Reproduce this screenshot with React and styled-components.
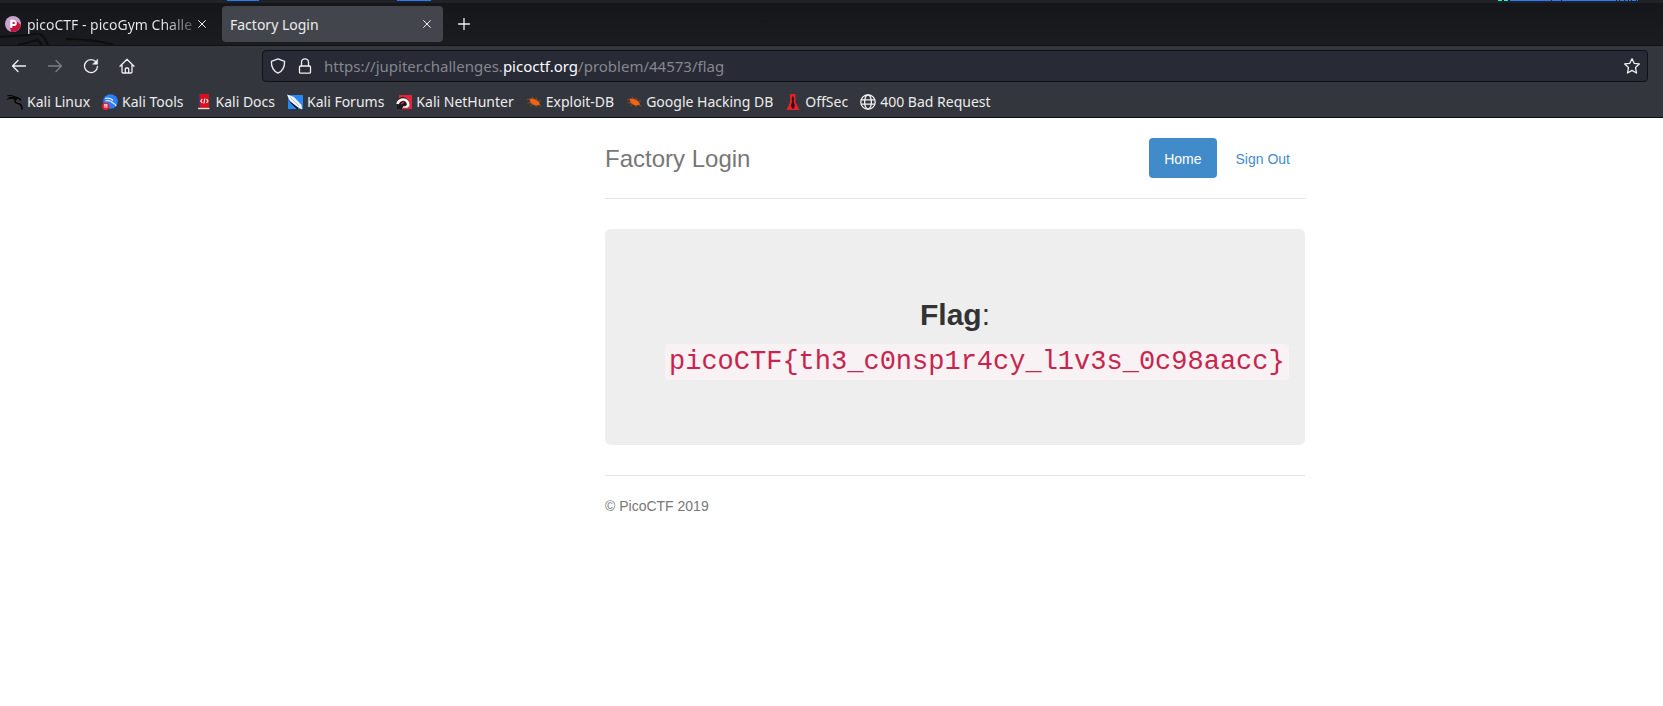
import React from "react";
import styled, { createGlobalStyle } from "styled-components";

const uiFont = `"Noto Sans", "Open Sans", sans-serif`;
const pageFont = `"Liberation Sans", Arial, sans-serif`;

const GlobalStyle = createGlobalStyle`
  *, *::before, *::after { box-sizing: border-box; }
  body { margin: 0; background: #fff; }
  button, input { font: inherit; color: inherit; }
`;

const Browser = styled.div`
  font: 14px/20px ${uiFont};
  color: #ececec;
`;

const PanelEdge = styled.div`
  display: flex;
  justify-content: space-between;
  height: 3px;
  background: #202228;
`;

const EdgeGroup = styled.div`
  display: flex;
  gap: ${(p) => p.$gap}px;
  padding: 0 ${(p) => p.$right || 0}px 0 ${(p) => p.$left || 0}px;
`;

const EdgeMark = styled.span`
  width: ${(p) => p.$size}px;
  height: 1px;
  margin-right: ${(p) => (p.$cyan ? 1 : 0)}px;
  background: ${(p) => (p.$cyan ? "#1ef5c8" : "#2a7bff")};
`;

const TabStrip = styled.div`
  position: relative;
  display: flex;
  align-items: center;
  height: 43px;
  background: linear-gradient(#15161a, #1b1c20);
  border-bottom: 1px solid #101114;
`;

const StripArt = styled.svg`
  position: absolute;
  left: 0;
  bottom: 0;
`;

const Tab = styled.div`
  position: relative;
  display: flex;
  align-items: center;
  gap: 6px;
  flex: 0 1 ${(p) => (p.$active ? 221 : 222)}px;
  min-width: 0;
  height: 36px;
  padding: 0 ${(p) => (p.$active ? "10px 0 8px" : "14px 0 5px")};
  border-radius: 4px;
  background: ${(p) => (p.$active ? "#42454b" : "transparent")};
`;

const TabTitle = styled.span`
  flex: 1;
  min-width: 0;
  padding-top: 2px;
  white-space: nowrap;
  ${(p) =>
    p.$fade &&
    `
    margin-right: -6px;
    background: linear-gradient(to right, #ececec 80%, #4a4b50);
    background-clip: text;
    color: transparent;
  `}
`;

const IconButton = styled.button`
  display: grid;
  place-items: center;
  flex: none;
  width: ${(p) => p.$size}px;
  height: ${(p) => p.$size}px;
  padding: 0;
  border: 0;
  background: none;
  color: ${(p) => (p.$dim ? "#7c7e84" : "#f0f0f2")};
`;

const NavBar = styled.div`
  display: flex;
  align-items: center;
  height: 40px;
  padding: 0 15px 0 1px;
  background: #33363d;
`;

const NavButtons = styled.div`
  display: flex;
  flex: 0 0 261px;
`;

const UrlBar = styled.div`
  display: flex;
  align-items: center;
  gap: 2px;
  flex: 1;
  min-width: 0;
  height: 32px;
  padding: 0 4px;
  border: 1px solid #0f1115;
  border-radius: 4px;
  background: #282a36;
`;

const UrlField = styled.label`
  position: relative;
  flex: 1;
  min-width: 0;
  margin-left: 3px;
  overflow: hidden;
  white-space: nowrap;
  color: #85878e;
  font-size: 15px;
`;

const UrlHost = styled.span`
  color: #fbfbfe;
`;

const UrlInput = styled.input`
  position: absolute;
  inset: 0;
  width: 100%;
  padding: 0;
  border: 0;
  outline: 0;
  background: none;
  color: transparent;
  caret-color: #fff;
`;

const Bookmarks = styled.nav`
  display: flex;
  align-items: center;
  gap: 12px;
  height: 32px;
  padding: 1px 7px 0;
  background: #33363d;
  border-bottom: 1px solid #0c0c0d;
`;

const Bookmark = styled.a`
  display: flex;
  align-items: center;
  gap: 4px;
  color: inherit;
  text-decoration: none;
  white-space: nowrap;
`;

const Page = styled.div`
  display: grid;
  grid-template-columns: minmax(0, 605fr) minmax(0, 700px) minmax(0, 358fr);
  padding-top: 20px;
  font: 14px/20px ${pageFont};
  color: #333;
`;

const Container = styled.div`
  grid-column: 2;
`;

const Header = styled.header`
  display: flex;
  justify-content: space-between;
  align-items: center;
  padding-bottom: 20px;
  border-bottom: 1px solid #e5e5e5;
`;

const SiteTitle = styled.h3`
  margin: 0;
  padding-top: 2px;
  font-size: 24px;
  line-height: 38px;
  font-weight: 400;
  color: #777;
`;

const Pills = styled.nav`
  display: flex;
  gap: 4px;
`;

const Pill = styled.a`
  padding: 11px 15px 9px;
  border-radius: 4px;
  text-decoration: none;
  background: ${(p) => (p.$active ? "#428bca" : "transparent")};
  color: ${(p) => (p.$active ? "#fff" : "#428bca")};
`;

const Jumbotron = styled.section`
  margin: 30px 0;
  padding: 64px 60px 61px;
  border-radius: 6px;
  background: #eee;
  text-align: center;
  font-size: 30px;
  line-height: 44px;
`;

const FlagText = styled.p`
  margin: 0;
`;

const FlagCode = styled.code`
  padding: 3px 4px;
  border-radius: 4px;
  background: #f9f2f4;
  color: #c7254e;
  font-family: "Liberation Mono", "Courier New", monospace;
  font-size: 27px;
  white-space: nowrap;
`;

const Footer = styled.footer`
  padding-top: 20px;
  border-top: 1px solid #e5e5e5;
  color: #777;
`;

const Svg = ({ size = 16, children, ...rest }) => (
  <svg width={size} height={size} viewBox="0 0 16 16" fill="none" aria-hidden="true" {...rest}>
    {children}
  </svg>
);

const line = { stroke: "currentColor", strokeWidth: 1.3, strokeLinecap: "round", strokeLinejoin: "round" };

const PicoIcon = () => (
  <Svg>
    <circle cx="8" cy="8" r="8" fill="#c9a2cf" />
    <path d="M10 3.5 15.9 9A8 8 0 0 1 6 15.7L5 12Z" fill="#c8143c" />
    <path d="M6.3 12V4.8h2.4a2.1 2.1 0 0 1 0 4.3H6.5" stroke="#fff" strokeWidth="2" />
  </Svg>
);
const CloseIcon = () => (
  <Svg size={10} {...line}><path d="M2.500 2.500l11 11M13.500 2.500l-11 11" strokeWidth="1.600" /></Svg>
);
const PlusIcon = () => <Svg {...line}><path d="M8 2.5v11M2.5 8h11" /></Svg>;
const BackIcon = () => <Svg {...line}><path d="M14.5 8h-13M7 2.5 1.5 8 7 13.5" /></Svg>;
const ForwardIcon = () => <Svg {...line}><path d="M1.5 8h13M9 2.5 14.5 8 9 13.5" /></Svg>;
const ReloadIcon = () => (
  <Svg {...line}>
    <path d="M13.2 4.2A6.5 6.5 0 1 0 14.5 8.5" />
    <path d="M14.6 1.5v4.7H9.9Z" fill="currentColor" strokeWidth=".6" />
  </Svg>
);
const HomeIcon = () => (
  <Svg {...line}>
    <path d="M1 8.3 8 1.2l7 7.1M3 6.8V14q0 1 1 1h8q1 0 1-1V6.8M6.3 15v-4q0-1 1-1h1.4q1 0 1 1v4" />
  </Svg>
);
const ShieldIcon = () => (
  <Svg {...line}><path d="M8 .9 14.6 3.4C14.7 9 12.2 13.2 8 15.1 3.8 13.2 1.3 9 1.4 3.4Z" /></Svg>
);
const LockIcon = () => (
  <Svg {...line}>
    <rect x="2.5" y="8" width="11" height="7.2" rx="1" />
    <path d="M4.5 8V4.3a3.5 3.5 0 0 1 7 0V8" />
  </Svg>
);
const StarIcon = () => (
  <Svg {...line}>
    <path d="M8 .7l2.200 4.600 5.100.6-3.800 3.500 1 5.600L8 12.400 3.500 15l1-5.600L.7 5.900l5.100-.6Z" />
  </Svg>
);
const DragonIcon = () => (
  <Svg stroke="#050506" strokeLinecap="round">
    <path d="M.8 1.8c2.5-.6 5-.4 7.5 1.4M.5 5.2c2-1 4.500-1.300 7-.2M2 3.500c3-.4 6 .5 7.500 2" strokeWidth="1.100" />
    <path d="M8 3.200c2 .2 4 .3 5.500 2.600M9 5c-2 1.500-1 4.200 2 4.500 2.500.3 4 2 4 5.500" strokeWidth="1.600" />
  </Svg>
);
const ToolsIcon = () => (
  <Svg>
    <circle cx="8.500" cy="7.500" r="7.300" fill="#2a7fff" />
    <path d="M3 4.500c4-1 6-.4 8 2M3.500 7c3-.7 5-.2 6.500 1.200s3.500 1 4 4" stroke="#e8f2ff" strokeWidth="1.200" />
    <circle cx="3.800" cy="12.200" r="3.700" fill="#e8222e" />
    <path d="M2 10.800h3.600M3 10.800v3M4.800 10.800v3" stroke="#fff" strokeWidth=".9" />
  </Svg>
);
const DocsIcon = () => (
  <Svg>
    <path d="M2 0h11v15H2Z" fill="#d8101c" />
    <path d="M2 0h1.500v14H2Z" fill="#173a78" />
    <path d="M2 14.500h11.500" stroke="#e9d8d8" strokeWidth="1.400" />
    <path d="M6.300 5 4.800 7l1.500 2M10.500 5 12 7l-1.500 2M8.900 4.500l-1 5" stroke="#fff" strokeWidth="1.100" />
  </Svg>
);
const ForumsIcon = () => (
  <Svg>
    <path d="M1 1h15v14H1Z" fill="#2787f5" />
    <path d="M0 .5 7 3l7.500 8 .5 4.500-5.500-3L3 7.500Z" fill="#f2f4f6" />
    <path d="M0 4.500 5.500 11l5 4.800 1-1.800L4 8Z" fill="#14171d" />
    <path d="M3 3l9 9" stroke="#8f989f" strokeWidth=".6" />
  </Svg>
);
const NetHunterIcon = () => (
  <Svg>
    <path d="M3 1h13v14H3Z" fill="#e3243a" />
    <path d="M1 7C4 2 9 2 12 6l2 4-4 5H1Z" fill="#1c1a20" />
    <path d="M1.500 10C3 5 9 4 11.500 8s-2 6.500-4.500 5" stroke="#f5f5f5" strokeWidth="2.600" />
    <path d="M6 14.500h7M5 10l3-2" stroke="#e3243a" strokeWidth="1.500" />
  </Svg>
);
const BugIcon = () => (
  <Svg>
    <path d="M3.500 4.500 8 4.800l5 3 1 3-4.500 1-5-2.800Z" fill="#f26411" />
    <path d="M1 5.500h4M1.500 9l4-.5M4 12l3-2M6 2.800l2 3M10 3.500l1 3M12.500 7h2.500M10.500 13l-1-2M13 11l2.500 1.300" stroke="#a9501c" strokeWidth=".7" />
  </Svg>
);
const OffSecIcon = () => (
  <Svg>
    <path d="M5 0h5.500v8l4 8h-13l3.500-8Z" fill="#e4202b" />
    <path d="M7.800 1.500 9 5l-.5 2.500 1.300 4-1 3H7l-1-3 1.200-4L6.700 5Z" fill="#2a1013" />
  </Svg>
);
const GlobeIcon = () => (
  <Svg stroke="#f4f4f4" strokeWidth="1.300">
    <circle cx="8" cy="8" r="7.200" />
    <ellipse cx="8" cy="8" rx="3.400" ry="7.200" />
    <path d="M1.500 5.800h13M1.500 10.200h13" />
  </Svg>
);

const bookmarks = [
  ["Kali Linux", DragonIcon],
  ["Kali Tools", ToolsIcon],
  ["Kali Docs", DocsIcon],
  ["Kali Forums", ForumsIcon],
  ["Kali NetHunter", NetHunterIcon],
  ["Exploit-DB", BugIcon],
  ["Google Hacking DB", BugIcon],
  ["OffSec", OffSecIcon],
  ["400 Bad Request", GlobeIcon],
];

export default function App() {
  return (
    <>
      <GlobalStyle />
      <Browser>
        <PanelEdge>
          <EdgeGroup $gap={138} $left={227}>
            <EdgeMark $size={32} />
            <EdgeMark $size={34} />
          </EdgeGroup>
          <EdgeGroup $gap={1} $right={25}>
            {[4, 4].map((w, i) => <EdgeMark key={i} $size={w} $cyan />)}
            {[41, 9, 54, 2, 4, 3, 2, 4, 1].map((w, i) => <EdgeMark key={i} $size={w} />)}
          </EdgeGroup>
        </PanelEdge>
        <TabStrip>
          <StripArt width="130" height="12" viewBox="0 0 130 12" fill="none" stroke="#0d0e10" aria-hidden="true">
            <path d="M0 4 28 2l12-2 5 6 3 6M18 12l20-5 4 5" strokeWidth="2" />
            <path d="M66 6q28 0 48 6" strokeWidth="2" />
          </StripArt>
          <Tab>
            <PicoIcon />
            <TabTitle $fade>picoCTF - picoGym Challe</TabTitle>
            <IconButton $size={12} aria-label="Close picoCTF tab"><CloseIcon /></IconButton>
          </Tab>
          <Tab $active>
            <TabTitle>Factory Login</TabTitle>
            <IconButton $size={12} aria-label="Close Factory Login tab"><CloseIcon /></IconButton>
          </Tab>
          <IconButton $size={42} aria-label="New tab"><PlusIcon /></IconButton>
        </TabStrip>
        <NavBar>
          <NavButtons>
            <IconButton $size={36} aria-label="Back"><BackIcon /></IconButton>
            <IconButton $size={36} $dim aria-label="Forward"><ForwardIcon /></IconButton>
            <IconButton $size={36} aria-label="Reload"><ReloadIcon /></IconButton>
            <IconButton $size={36} aria-label="Home"><HomeIcon /></IconButton>
          </NavButtons>
          <UrlBar>
            <IconButton $size={22} aria-label="Tracking protection"><ShieldIcon /></IconButton>
            <IconButton $size={28} aria-label="Site information"><LockIcon /></IconButton>
            <UrlField>
              <span>https://jupiter.challenges.<UrlHost>picoctf.org</UrlHost>/problem/44573/flag</span>
              <UrlInput aria-label="Address" />
            </UrlField>
            <IconButton $size={22} aria-label="Bookmark this page"><StarIcon /></IconButton>
          </UrlBar>
        </NavBar>
        <Bookmarks aria-label="Bookmarks">
          {bookmarks.map(([name, Icon]) => (
            <Bookmark key={name} href="#"><Icon />{name}</Bookmark>
          ))}
        </Bookmarks>
      </Browser>
      <Page>
        <Container>
          <Header>
            <SiteTitle>Factory Login</SiteTitle>
            <Pills>
              <Pill href="#" $active>Home</Pill>
              <Pill href="#">Sign Out</Pill>
            </Pills>
          </Header>
          <Jumbotron>
            <FlagText><b>Flag</b>:</FlagText>
            <FlagText><FlagCode>{"picoCTF{th3_c0nsp1r4cy_l1v3s_0c98aacc}"}</FlagCode></FlagText>
          </Jumbotron>
          <Footer>© PicoCTF 2019</Footer>
        </Container>
      </Page>
    </>
  );
}
